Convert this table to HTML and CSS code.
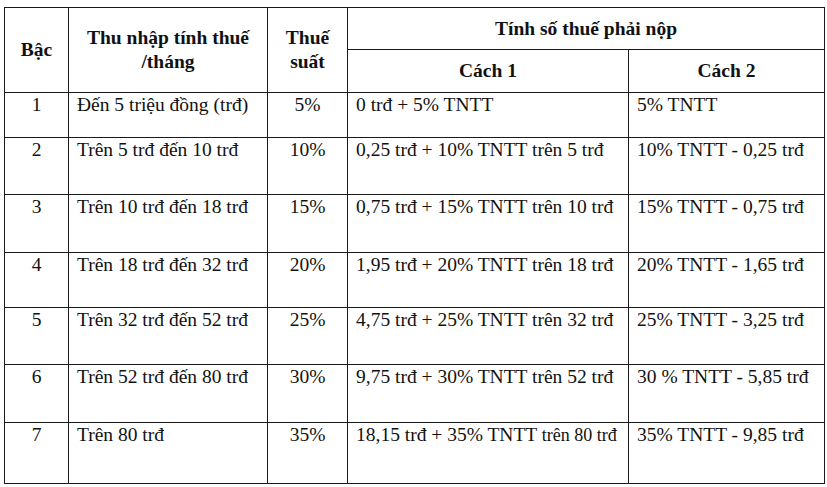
FILE: index.html
```html
<!DOCTYPE html>
<html lang="vi">
<head>
<meta charset="utf-8">
<link rel="stylesheet" href="styles.css">
</head>
<body>
<div class="wrap">
<table class="tax">
  <colgroup>
    <col class="c1"><col class="c2"><col class="c3"><col class="c4"><col class="c5">
  </colgroup>
  <thead>
    <tr class="h1">
      <th rowspan="2">Bậc</th>
      <th rowspan="2">Thu nhập tính thuế<br>/tháng</th>
      <th rowspan="2">Thuế<br>suất</th>
      <th colspan="2">Tính số thuế phải nộp</th>
    </tr>
    <tr class="h2">
      <th>Cách 1</th>
      <th>Cách 2</th>
    </tr>
  </thead>
  <tbody>
    <tr class="r1"><td class="ctr">1</td><td>Đến 5 triệu đồng (trđ)</td><td class="ctr">5%</td><td>0 trđ + 5% TNTT</td><td>5% TNTT</td></tr>
    <tr class="r2"><td class="ctr">2</td><td>Trên 5 trđ đến 10 trđ</td><td class="ctr">10%</td><td>0,25 trđ + 10% TNTT trên 5 trđ</td><td>10% TNTT - 0,25 trđ</td></tr>
    <tr class="r3"><td class="ctr">3</td><td>Trên 10 trđ đến 18 trđ</td><td class="ctr">15%</td><td>0,75 trđ + 15% TNTT trên 10 trđ</td><td>15% TNTT - 0,75 trđ</td></tr>
    <tr class="r4"><td class="ctr">4</td><td>Trên 18 trđ đến 32 trđ</td><td class="ctr">20%</td><td>1,95 trđ + 20% TNTT trên 18 trđ</td><td>20% TNTT - 1,65 trđ</td></tr>
    <tr class="r5"><td class="ctr">5</td><td>Trên 32 trđ đến 52 trđ</td><td class="ctr">25%</td><td>4,75 trđ + 25% TNTT trên 32 trđ</td><td>25% TNTT - 3,25 trđ</td></tr>
    <tr class="r6"><td class="ctr">6</td><td>Trên 52 trđ đến 80 trđ</td><td class="ctr">30%</td><td>9,75 trđ + 30% TNTT trên 52 trđ</td><td>30 % TNTT - 5,85 trđ</td></tr>
    <tr class="r7"><td class="ctr">7</td><td>Trên 80 trđ</td><td class="ctr">35%</td><td>18,15 trđ + 35% TNTT <span class="small">trên 80 trđ</span></td><td>35% TNTT - 9,85 trđ</td></tr>
  </tbody>
</table>
</div>
</body>
</html>
```

FILE: styles.css
```css
html, body {
  margin: 0;
  padding: 0;
  background: #ffffff;
}
.wrap {
  padding: 7px 0 0 4px;
}
.tax {
  border-collapse: collapse;
  table-layout: fixed;
  width: 820px;
  font-family: "Liberation Serif", "DejaVu Serif", serif;
  font-size: 19.5px;
  color: #111111;
}
.tax th, .tax td {
  font-family: "Liberation Serif", "DejaVu Serif", serif;
}
.c1 { width: 64px; }
.c2 { width: 199px; }
.c3 { width: 80px; }
.c4 { width: 281px; }
.c5 { width: 196px; }
.tax th, .tax td {
  border: 1px solid #1a1a1a;
  padding: 0;
  overflow: hidden;
  white-space: nowrap;
}
.tax th {
  font-weight: bold;
  text-align: center;
  vertical-align: middle;
  line-height: 24px;
}
.tax td {
  vertical-align: top;
  text-align: left;
  padding: 1px 0 0 8px;
  line-height: 22px;
}
.tax td.ctr {
  text-align: center;
  padding-left: 0;
}
.h1 { height: 42px; }
.h2 { height: 43px; }
.r1 { height: 45px; }
.r2 { height: 57px; }
.r3 { height: 58px; }
.r4 { height: 55px; }
.r5 { height: 57px; }
.r6 { height: 58px; }
.r7 { height: 61px; }
.small {
  font-size: 18px;
}
```
